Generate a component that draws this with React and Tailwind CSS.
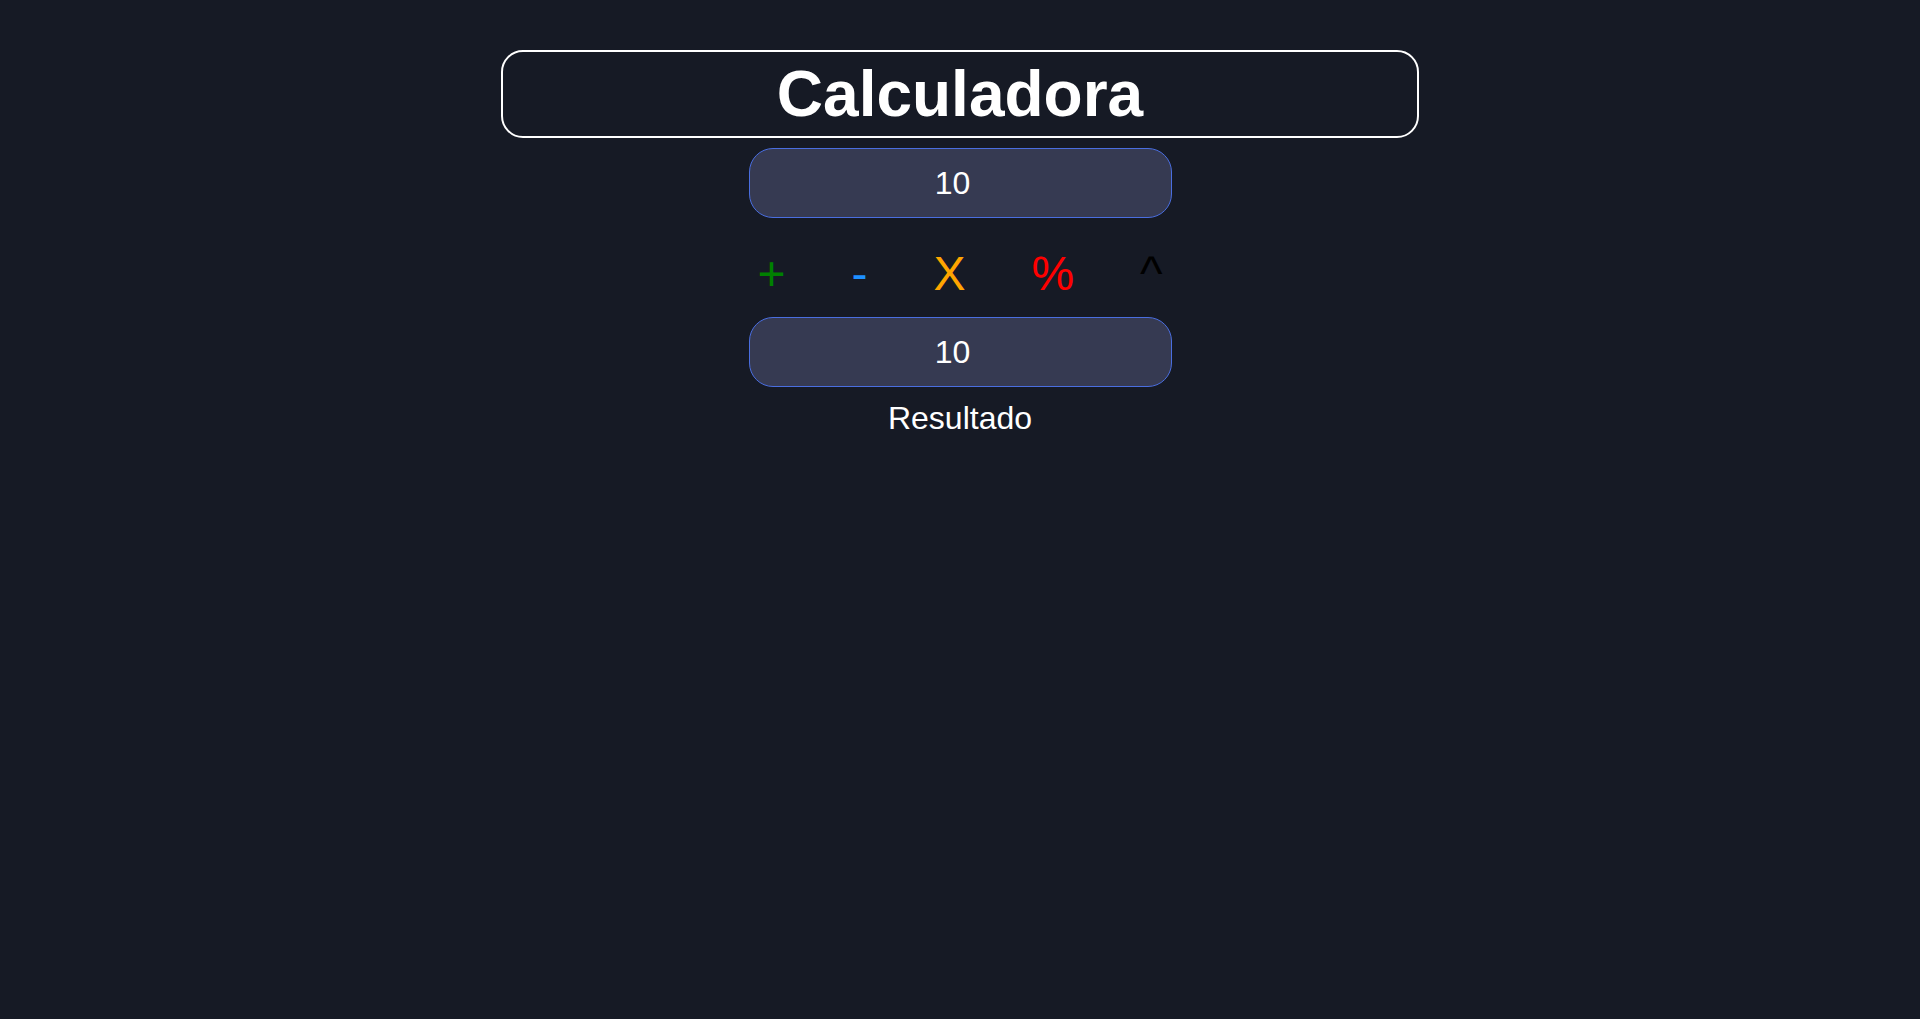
import React from "react";

export default function App() {
  return (
    <div
      className="min-h-screen w-full bg-[#161a25] flex flex-col items-center pt-[50px]"
      style={{ fontFamily: '"Liberation Sans", Arial, sans-serif' }}
    >
      <h1 className="w-[918px] border-2 border-white rounded-[22px] text-center text-[64px] font-bold leading-[normal] py-[5px] text-white">
        Calculadora
      </h1>
      <input
        className="mt-[10px] w-[423px] h-[70px] rounded-[24px] border border-[#4a6ee0] bg-[#363a52] text-white text-[32px] text-center pr-[15px] outline-none"
        defaultValue="10"
        readOnly
      />
      <div className="mt-[28px] flex items-center gap-[66px] text-[48px] leading-[normal]">
        <button className="text-[#008000] leading-[normal]">+</button>
        <button className="text-[#1e90ff] leading-[normal]">-</button>
        <button className="text-[#ffa500] leading-[normal]">X</button>
        <button className="text-[#ff0000] leading-[normal]">%</button>
        <button className="text-black leading-[normal]">^</button>
      </div>
      <input
        className="mt-[16px] w-[423px] h-[70px] rounded-[24px] border border-[#4a6ee0] bg-[#363a52] text-white text-[32px] text-center pr-[15px] outline-none"
        defaultValue="10"
        readOnly
      />
      <p className="mt-[13px] text-[32px] leading-[normal] text-white">Resultado</p>
    </div>
  );
}
